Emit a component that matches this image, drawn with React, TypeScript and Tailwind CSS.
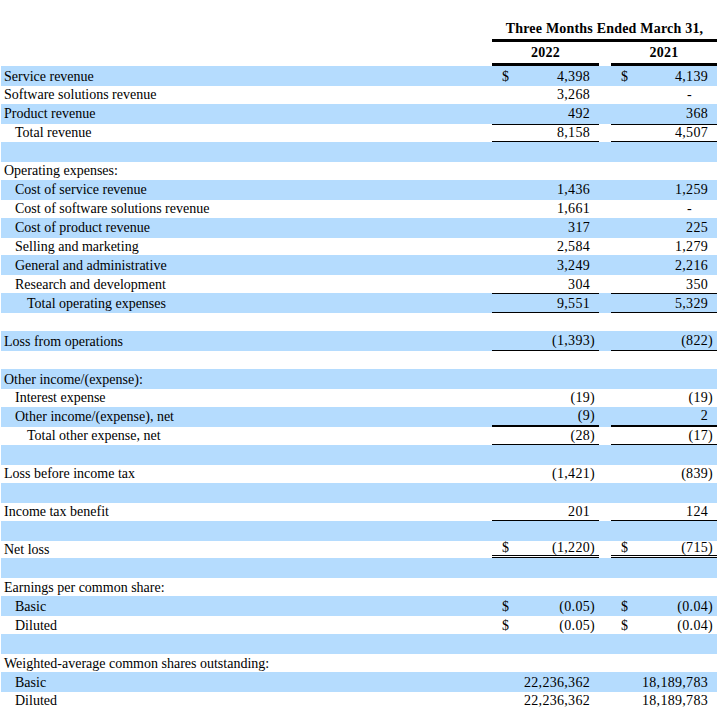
type Cell = { v: string; dollar?: boolean; neg?: boolean; dash?: boolean }
type Line = 'none' | 'top' | 'bottom' | 'both' | 'thick' | 'double'
type Row = { label: string; indent: 0 | 1 | 2; a?: Cell; b?: Cell; line?: Line }

const rows: Row[] = [
  { label: 'Service revenue', indent: 0, a: { v: '4,398', dollar: true }, b: { v: '4,139', dollar: true } },
  { label: 'Software solutions revenue', indent: 0, a: { v: '3,268' }, b: { v: '-', dash: true } },
  { label: 'Product revenue', indent: 0, a: { v: '492' }, b: { v: '368' } },
  { label: 'Total revenue', indent: 1, a: { v: '8,158' }, b: { v: '4,507' }, line: 'both' },
  { label: '', indent: 0 },
  { label: 'Operating expenses:', indent: 0 },
  { label: 'Cost of service revenue', indent: 1, a: { v: '1,436' }, b: { v: '1,259' } },
  { label: 'Cost of software solutions revenue', indent: 1, a: { v: '1,661' }, b: { v: '-', dash: true } },
  { label: 'Cost of product revenue', indent: 1, a: { v: '317' }, b: { v: '225' } },
  { label: 'Selling and marketing', indent: 1, a: { v: '2,584' }, b: { v: '1,279' } },
  { label: 'General and administrative', indent: 1, a: { v: '3,249' }, b: { v: '2,216' } },
  { label: 'Research and development', indent: 1, a: { v: '304' }, b: { v: '350' } },
  { label: 'Total operating expenses', indent: 2, a: { v: '9,551' }, b: { v: '5,329' }, line: 'both' },
  { label: '', indent: 0 },
  { label: 'Loss from operations', indent: 0, a: { v: '1,393', neg: true }, b: { v: '822', neg: true }, line: 'bottom' },
  { label: '', indent: 0 },
  { label: 'Other income/(expense):', indent: 0 },
  { label: 'Interest expense', indent: 1, a: { v: '19', neg: true }, b: { v: '19', neg: true } },
  { label: 'Other income/(expense), net', indent: 1, a: { v: '9', neg: true }, b: { v: '2' }, line: 'thick' },
  { label: 'Total other expense, net', indent: 2, a: { v: '28', neg: true }, b: { v: '17', neg: true }, line: 'bottom' },
  { label: '', indent: 0 },
  { label: 'Loss before income tax', indent: 0, a: { v: '1,421', neg: true }, b: { v: '839', neg: true } },
  { label: '', indent: 0 },
  { label: 'Income tax benefit', indent: 0, a: { v: '201' }, b: { v: '124' }, line: 'bottom' },
  { label: '', indent: 0 },
  { label: 'Net loss', indent: 0, a: { v: '1,220', neg: true, dollar: true }, b: { v: '715', neg: true, dollar: true }, line: 'double' },
  { label: '', indent: 0 },
  { label: 'Earnings per common share:', indent: 0 },
  { label: 'Basic', indent: 1, a: { v: '0.05', neg: true, dollar: true }, b: { v: '0.04', neg: true, dollar: true } },
  { label: 'Diluted', indent: 1, a: { v: '0.05', neg: true, dollar: true }, b: { v: '0.04', neg: true, dollar: true } },
  { label: '', indent: 0 },
  { label: 'Weighted-average common shares outstanding:', indent: 0 },
  { label: 'Basic', indent: 1, a: { v: '22,236,362' }, b: { v: '18,189,783' } },
  { label: 'Diluted', indent: 1, a: { v: '22,236,362' }, b: { v: '18,189,783' } },
]

const indentClass = { 0: 'pl-[3px]', 1: 'pl-[14px]', 2: 'pl-[26px]' }

const lineClass: Record<Line, string> = {
  none: '',
  top: 'border-t border-black',
  bottom: 'border-b border-black',
  both: 'border-t border-b border-black',
  thick: 'border-b-2 border-black',
  double: 'border-b-[3px] border-double border-black',
}

function Amount({ cell, width, line }: { cell?: Cell; width: string; line: Line }) {
  return (
    <div className={`${width} h-full flex items-center pl-[10px] ${lineClass[line]}`}>
      <span className="w-[8px]">{cell?.dollar ? '$' : ''}</span>
      <span className={`flex-1 text-right tracking-[0.3px] ${cell?.dash ? 'pr-[16px]' : ''}`}>
        {cell ? (cell.neg ? `(${cell.v}` : cell.v) : ''}
      </span>
      <span className="w-[9px]">{cell?.neg ? ')' : ''}</span>
    </div>
  )
}

export default function App() {
  return (
    <div className="w-[719px] h-[726px] bg-white text-black font-['Liberation_Serif',serif] text-[14px] pl-[1px]">
      {/* Column headers */}
      <div className="flex h-[42px]">
        <div className="w-[491px]" />
        <div className="w-[225px] border-b-[3px] border-black flex items-end justify-center font-bold tracking-[0.2px]">
          Three Months Ended March 31,
        </div>
      </div>
      <div className="flex h-[24px] font-bold tracking-[0.3px]">
        <div className="w-[491px]" />
        <div className="w-[107px] border-b-[3px] border-black flex items-center justify-center">2022</div>
        <div className="w-[12px]" />
        <div className="w-[106px] border-b-[3px] border-black flex items-center justify-center">2021</div>
      </div>

      {/* Statement rows */}
      {rows.map((row, i) => {
        const blue = i % 2 === 0
        const line = row.line ?? 'none'
        return (
          <div
            key={i}
            className={`flex w-[716px] ${blue ? 'bg-[#b5dcfe] h-[20px]' : 'h-[17.875px]'}`}
          >
            <div className={`w-[491px] flex items-center whitespace-nowrap ${indentClass[row.indent]}`}>
              {row.label}
            </div>
            <Amount cell={row.a} width="w-[107px]" line={line} />
            <div className="w-[12px]" />
            <Amount cell={row.b} width="w-[106px]" line={line} />
          </div>
        )
      })}
    </div>
  )
}
